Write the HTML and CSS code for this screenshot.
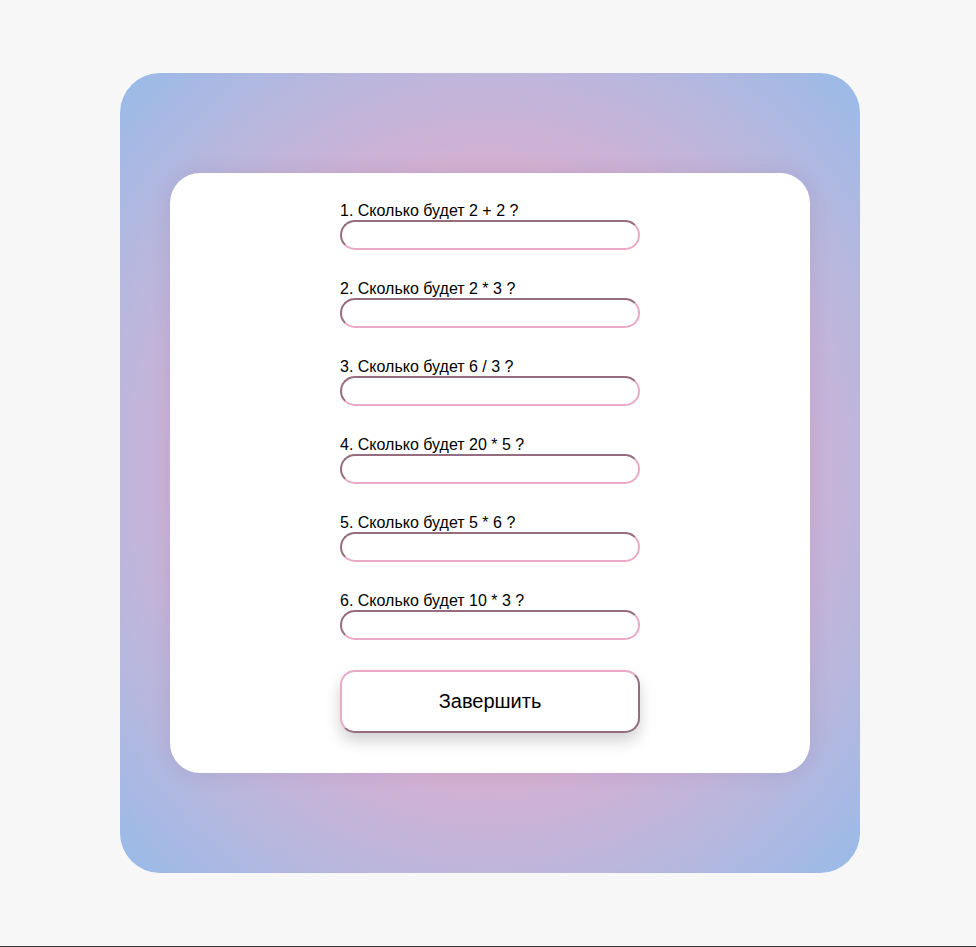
FILE: index.html
```html
<!DOCTYPE html>
<html lang="ru">
<head>
<meta charset="utf-8">
<title>Тест</title>
<link rel="stylesheet" href="styles.css">
</head>
<body>
<div class="page">
  <div class="frame">
    <form class="card">
      <div class="group"><label class="q">1. Сколько будет 2 + 2 ?</label><input class="answer" type="text"></div>
      <div class="group"><label class="q">2. Сколько будет 2 * 3 ?</label><input class="answer" type="text"></div>
      <div class="group"><label class="q">3. Сколько будет 6 / 3 ?</label><input class="answer" type="text"></div>
      <div class="group"><label class="q">4. Сколько будет 20 * 5 ?</label><input class="answer" type="text"></div>
      <div class="group"><label class="q">5. Сколько будет 5 * 6 ?</label><input class="answer" type="text"></div>
      <div class="group"><label class="q">6. Сколько будет 10 * 3 ?</label><input class="answer" type="text"></div>
      <button class="finish" type="button">Завершить</button>
    </form>
  </div>
</div>
</body>
</html>
```

FILE: styles.css
```css
html, body {
  margin: 0;
  padding: 0;
  background: #f7f7f7;
  font-family: "Liberation Sans", Arial, sans-serif;
}
.page {
  height: 946px;
  border-bottom: 1px solid #3a3a3a;
  display: flex;
  align-items: center;
  padding-left: 120px;
}
.frame {
  width: 740px;
  height: 800px;
  box-sizing: border-box;
  padding: 100px 50px;
  border-radius: 40px;
  background: radial-gradient(ellipse farthest-corner at center, #dcadcf 0%, #d6b0d2 52%, #bdb6dc 72%, #98bbe8 100%);
}
.card {
  height: 600px;
  box-sizing: border-box;
  background: #fff;
  border-radius: 30px;
  box-shadow: 0 0 20px rgba(90, 60, 110, 0.12);
  padding-top: 29px;
  display: flex;
  flex-direction: column;
  align-items: center;
}
.group {
  width: 300px;
  display: flex;
  flex-direction: column;
  margin-bottom: 30px;
}
.q {
  font-size: 16px;
  line-height: 18px;
  color: #000;
}
.answer {
  height: 30px;
  box-sizing: border-box;
  margin: 0;
  border: 2px inset #eaa9c7;
  border-radius: 15px;
  background: #fff;
  padding: 0 12px;
  font-family: inherit;
  font-size: 16px;
  outline: none;
}
.finish {
  width: 300px;
  height: 63px;
  margin-top: 0;
  box-sizing: border-box;
  border: 2px outset #eaa9c7;
  border-radius: 15px;
  background: #fff;
  color: #000;
  font-family: inherit;
  font-size: 20px;
  box-shadow: 0 8px 15px rgba(0, 0, 0, 0.18);
  cursor: pointer;
}
```
